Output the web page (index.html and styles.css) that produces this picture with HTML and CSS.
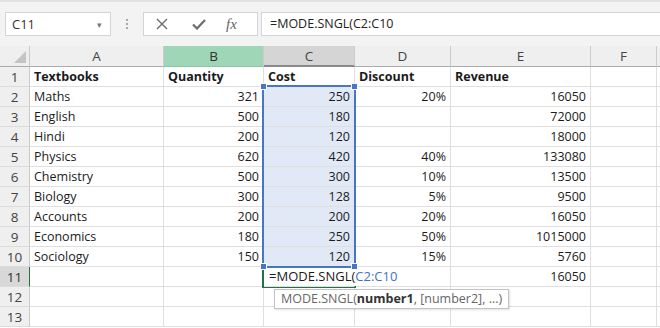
FILE: index.html
```html
<!DOCTYPE html>
<html>

<head>
	<meta charset="utf-8">
	<title>Book Sheet</title>
	<link rel="stylesheet" href="styles.css">
</head>

<body>
	<div class="toolbar">
		<div class="namebox">
			<span>C11</span>
			<span class="arrow">&#9662;</span>
		</div>
		<div class="grip"><i></i><i></i><i></i></div>
		<div class="fxbox">
			<svg width="12" height="12" viewBox="0 0 12 12"><path d="M1 1 L11 11 M11 1 L1 11" stroke="#6b6b6b" stroke-width="1.4" fill="none"/></svg>
			<svg width="14" height="11" viewBox="0 0 14 11"><path d="M1 5.5 L5 9.5 L13 1" stroke="#6b6b6b" stroke-width="2.2" fill="none"/></svg>
			<span class="fx">fx</span>
		</div>
		<div class="formula">=MODE.SNGL(C2:C10</div>
	</div>

	<div class="sheet">
		<div class="row head">
			<div class="rh corner"><span class="tri"></span></div>
			<div class="c ca">A</div>
			<div class="c cb hl">B</div>
			<div class="c cc act">C</div>
			<div class="c cd">D</div>
			<div class="c ce">E</div>
			<div class="c cf">F</div>
			<div class="c cg"></div>
		</div>
		<div class="row">
			<div class="rh">1</div>
			<div class="c ca b">Textbooks</div>
			<div class="c cb b">Quantity</div>
			<div class="c cc b">Cost</div>
			<div class="c cd b">Discount</div>
			<div class="c ce b">Revenue</div>
			<div class="c cf"></div>
			<div class="c cg"></div>
		</div>
		<div class="row">
			<div class="rh">2</div>
			<div class="c ca">Maths</div>
			<div class="c cb n">321</div>
			<div class="c cc n sel">250</div>
			<div class="c cd n">20%</div>
			<div class="c ce n">16050</div>
			<div class="c cf"></div>
			<div class="c cg"></div>
		</div>
		<div class="row">
			<div class="rh">3</div>
			<div class="c ca">English</div>
			<div class="c cb n">500</div>
			<div class="c cc n sel">180</div>
			<div class="c cd n"></div>
			<div class="c ce n">72000</div>
			<div class="c cf"></div>
			<div class="c cg"></div>
		</div>
		<div class="row">
			<div class="rh">4</div>
			<div class="c ca">Hindi</div>
			<div class="c cb n">200</div>
			<div class="c cc n sel">120</div>
			<div class="c cd n"></div>
			<div class="c ce n">18000</div>
			<div class="c cf"></div>
			<div class="c cg"></div>
		</div>
		<div class="row">
			<div class="rh">5</div>
			<div class="c ca">Physics</div>
			<div class="c cb n">620</div>
			<div class="c cc n sel">420</div>
			<div class="c cd n">40%</div>
			<div class="c ce n">133080</div>
			<div class="c cf"></div>
			<div class="c cg"></div>
		</div>
		<div class="row">
			<div class="rh">6</div>
			<div class="c ca">Chemistry</div>
			<div class="c cb n">500</div>
			<div class="c cc n sel">300</div>
			<div class="c cd n">10%</div>
			<div class="c ce n">13500</div>
			<div class="c cf"></div>
			<div class="c cg"></div>
		</div>
		<div class="row">
			<div class="rh">7</div>
			<div class="c ca">Biology</div>
			<div class="c cb n">300</div>
			<div class="c cc n sel">128</div>
			<div class="c cd n">5%</div>
			<div class="c ce n">9500</div>
			<div class="c cf"></div>
			<div class="c cg"></div>
		</div>
		<div class="row">
			<div class="rh">8</div>
			<div class="c ca">Accounts</div>
			<div class="c cb n">200</div>
			<div class="c cc n sel">200</div>
			<div class="c cd n">20%</div>
			<div class="c ce n">16050</div>
			<div class="c cf"></div>
			<div class="c cg"></div>
		</div>
		<div class="row">
			<div class="rh">9</div>
			<div class="c ca">Economics</div>
			<div class="c cb n">180</div>
			<div class="c cc n sel">250</div>
			<div class="c cd n">50%</div>
			<div class="c ce n">1015000</div>
			<div class="c cf"></div>
			<div class="c cg"></div>
		</div>
		<div class="row">
			<div class="rh">10</div>
			<div class="c ca">Sociology</div>
			<div class="c cb n">150</div>
			<div class="c cc n sel">120</div>
			<div class="c cd n">15%</div>
			<div class="c ce n">5760</div>
			<div class="c cf"></div>
			<div class="c cg"></div>
		</div>
		<div class="row">
			<div class="rh act">11</div>
			<div class="c ca"></div>
			<div class="c cb"></div>
			<div class="c cc edit">=MODE.SNGL(<span class="ref">C2:C10</span></div>
			<div class="c cd"></div>
			<div class="c ce n">16050</div>
			<div class="c cf"></div>
			<div class="c cg"></div>
		</div>
		<div class="row">
			<div class="rh">12</div>
			<div class="c ca"></div>
			<div class="c cb"></div>
			<div class="c cc"></div>
			<div class="c cd"></div>
			<div class="c ce"></div>
			<div class="c cf"></div>
			<div class="c cg"></div>
		</div>
		<div class="row">
			<div class="rh">13</div>
			<div class="c ca"></div>
			<div class="c cb"></div>
			<div class="c cc"></div>
			<div class="c cd"></div>
			<div class="c ce"></div>
			<div class="c cf"></div>
			<div class="c cg"></div>
		</div>

		<!-- range and active cell drawn over the grid -->
		<div class="range">
			<i class="dot tl"></i><i class="dot tr"></i><i class="dot bl"></i><i class="dot br"></i>
		</div>
		<div class="active"></div>
		<div class="tip">MODE.SNGL(<b>number1</b>, [number2], ...)</div>
	</div>
</body>

</html>
```

FILE: styles.css
```css
body {
	margin: 0;
	width: 660px;
	height: 328px;
	overflow: hidden;
	background-color: #ffffff;
	font-family: "Open Sans", "Liberation Sans", sans-serif;
	font-size: 12.5px;
	color: #1a1a1a;
}

.toolbar {
	height: 46px;
	box-sizing: border-box;
	border-top: 2px solid #e2e2e2;
	background-color: #f3f3f3;
	display: flex;
	align-items: flex-start;
	padding-top: 10px;
}

.namebox {
	margin-left: 5px;
	width: 106px;
	height: 24px;
	box-sizing: border-box;
	background-color: #fff;
	border: 1px solid #d4d4d4;
	display: flex;
	align-items: center;
	justify-content: space-between;
	padding: 0 8px 0 6px;
	font-size: 13px;
	color: #333;
}

.namebox .arrow {
	font-size: 9px;
	color: #777;
}

.grip {
	width: 32px;
	height: 24px;
	display: flex;
	flex-direction: column;
	align-items: center;
	justify-content: center;
	gap: 2px;
}

.grip i {
	width: 2px;
	height: 2px;
	background-color: #a8a8a8;
}

.fxbox {
	width: 115px;
	height: 24px;
	box-sizing: border-box;
	background-color: #fff;
	border: 1px solid #d4d4d4;
	display: flex;
	align-items: center;
	padding-left: 12px;
	gap: 24px;
}

.fx {
	font-family: "Liberation Serif", serif;
	font-style: italic;
	font-size: 15px;
	color: #666;
	margin-left: -4px;
}

.formula {
	margin-left: 3px;
	flex: 1;
	height: 24px;
	box-sizing: border-box;
	background-color: #fff;
	border: 1px solid #d4d4d4;
	border-right: none;
	padding-left: 8px;
	line-height: 22px;
	font-size: 12.5px;
	color: #222;
}

.sheet {
	position: relative;
}

.row {
	display: flex;
	height: 20px;
}

.row.head {
	height: 21px;
}

.rh {
	width: 30px;
	flex: none;
	box-sizing: border-box;
	background-color: #efefef;
	border-right: 1px solid #c9c9c9;
	border-bottom: 1px solid #dcdcdc;
	text-align: center;
	line-height: 20px;
	font-size: 13.5px;
	color: #444;
}

.rh.act {
	background-color: #d8d8d8;
	border-right-color: #217346;
	color: #333;
}

.c {
	flex: none;
	box-sizing: border-box;
	border-right: 1px solid #dfdfdf;
	border-bottom: 1px solid #dfdfdf;
	padding: 0 4px;
	line-height: 19px;
	white-space: nowrap;
}

.head .c {
	background-color: #efefef;
	border-right: 1px solid #cccccc;
	border-bottom: 1px solid #ababab;
	text-align: center;
	line-height: 20px;
	font-size: 13.5px;
	color: #444;
}

.head .c.hl {
	background-color: #9fd6b8;
	border-bottom-color: #8fc3a6;
	color: #333;
}

.head .c.act {
	background-color: #d5d5d5;
	border-bottom: 2px solid #8a8a8a;
}

.corner {
	position: relative;
	border-bottom: 1px solid #ababab;
}

.tri {
	position: absolute;
	right: 3px;
	bottom: 3px;
	width: 0;
	height: 0;
	border-left: 12px solid transparent;
	border-bottom: 12px solid #c4c4c4;
}

.ca { width: 134px; }
.cb { width: 100px; }
.cc { width: 91px; }
.cd { width: 96px; }
.ce { width: 140px; }
.cf { width: 66px; }
.cg { flex: 1; }

.b {
	font-weight: bold;
}

.n {
	text-align: right;
}

.sel {
	background-color: #e2e9f6;
}

.edit {
	overflow: visible;
	position: relative;
	z-index: 3;
	padding-left: 5px;
	font-size: 13px;
	border-right-color: transparent;
}

.ref {
	color: #3f73c8;
}

.range {
	position: absolute;
	left: 262px;
	top: 39px;
	width: 94px;
	height: 183px;
	box-sizing: border-box;
	border: 2px solid #4a74c4;
	z-index: 3;
}

.dot {
	position: absolute;
	width: 5px;
	height: 5px;
	background-color: #4a74c4;
	border: 1px solid #fff;
}

.tl { left: -4px; top: -4px; }
.tr { right: -4px; top: -4px; }
.bl { left: -4px; bottom: -4px; }
.br { right: -4px; bottom: -4px; }

.active {
	position: absolute;
	left: 262px;
	top: 221px;
	width: 94px;
	height: 21px;
	box-sizing: border-box;
	border-left: 2px solid #217346;
	border-bottom: 2px solid #217346;
	z-index: 2;
}

.tip {
	position: absolute;
	left: 274px;
	top: 243px;
	height: 20px;
	box-sizing: border-box;
	padding: 0 6px;
	background-color: #fff;
	border: 1px solid #c2c2c2;
	box-shadow: 1px 1px 2px rgba(0, 0, 0, 0.12);
	line-height: 18px;
	font-size: 12.5px;
	color: #666;
	z-index: 4;
}

.tip b {
	color: #333;
}
```
